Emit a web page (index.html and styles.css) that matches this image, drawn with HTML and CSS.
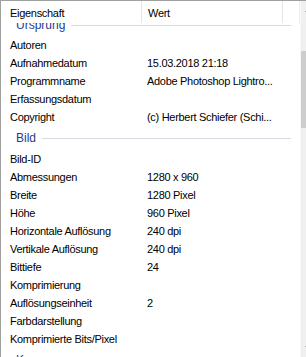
FILE: index.html
```html
<!DOCTYPE html>
<html lang="de">
<head>
    <meta charset="UTF-8">
    <title>Eigenschaften</title>
    <link rel="stylesheet" href="styles.css">
</head>
<body>

    <div class="frame">
        <div class="view">
            <div class="main">
                <div class="head">
                    <div class="hcell c1">Eigenschaft</div>
                    <div class="hcell c2">Wert</div>
                    <div class="hcell c3"></div>
                </div>
                <div class="rows">
                    <div class="group first"><span>Ursprung</span><i></i></div>
                    <div class="row"><span class="k">Autoren</span><span class="v"></span></div>
                    <div class="row"><span class="k">Aufnahmedatum</span><span class="v">15.03.2018 21:18</span></div>
                    <div class="row"><span class="k">Programmname</span><span class="v">Adobe Photoshop Lightro...</span></div>
                    <div class="row"><span class="k">Erfassungsdatum</span><span class="v"></span></div>
                    <div class="row"><span class="k">Copyright</span><span class="v">(c) Herbert Schiefer (Schi...</span></div>
                    <div class="group"><span>Bild</span><i></i></div>
                    <div class="row"><span class="k">Bild-ID</span><span class="v"></span></div>
                    <div class="row"><span class="k">Abmessungen</span><span class="v">1280 x 960</span></div>
                    <div class="row"><span class="k">Breite</span><span class="v">1280 Pixel</span></div>
                    <div class="row"><span class="k">Höhe</span><span class="v">960 Pixel</span></div>
                    <div class="row"><span class="k">Horizontale Auflösung</span><span class="v">240 dpi</span></div>
                    <div class="row"><span class="k">Vertikale Auflösung</span><span class="v">240 dpi</span></div>
                    <div class="row"><span class="k">Bittiefe</span><span class="v">24</span></div>
                    <div class="row"><span class="k">Komprimierung</span><span class="v"></span></div>
                    <div class="row"><span class="k">Auflösungseinheit</span><span class="v">2</span></div>
                    <div class="row"><span class="k">Farbdarstellung</span><span class="v"></span></div>
                    <div class="row"><span class="k">Komprimierte Bits/Pixel</span><span class="v"></span></div>
                    <div class="group"><span>Kamera</span><i></i></div>
                </div>
            </div>
            <div class="scroll">
                <div class="arrow"><svg width="9" height="5" viewBox="0 0 9 5"><path d="M0 5 L4.5 0 L9 5 Z" fill="#606060"/></svg></div>
                <div class="track">
                    <div class="thumb"></div>
                </div>
                <div class="arrow"><svg width="9" height="5" viewBox="0 0 9 5"><path d="M0 0 L4.5 5 L9 0 Z" fill="#606060"/></svg></div>
            </div>
        </div>
    </div>

</body>
</html>
```

FILE: styles.css
```css
body { margin: 0; background: #fff; font-family: "Liberation Sans", Arial, sans-serif; font-size: 11px; letter-spacing: -0.3px; color: #000; }
.frame { width: 306px; height: 357px; overflow: hidden; }
.view { width: 317px; height: 357px; display: flex; border-top: 1px solid #a0a0a0; border-left: 1px solid #a0a0a0; box-sizing: border-box; }
.main { flex: 1; display: flex; flex-direction: column; overflow: hidden; background: #fff; }
.head { height: 22px; display: flex; flex-shrink: 0; background: #fff; position: relative; z-index: 1; }
.hcell { height: 22px; line-height: 24px; padding-left: 9px; box-sizing: border-box; border-right: 1px solid #e5e5e5; }
.c1 { width: 141px; }
.c2 { width: 141px; padding-left: 6px; }
.c3 { flex: 1; border-right: 1px solid #f0f0f0; }
.rows { flex: 1; overflow: hidden; }
.row { height: 18.1px; display: flex; align-items: center; }
.k { width: 146px; padding-left: 9px; box-sizing: border-box; }
.v { flex: 1; white-space: nowrap; }
.group { height: 23px; display: flex; align-items: center; padding-left: 15px; color: #1e3c91; font-size: 12px; letter-spacing: 0; }
.group.first { margin-top: -10px; }
.group i { flex: 1; height: 1px; background: #d5dae3; margin: 1px 9px 0 6px; }
.scroll { width: 17px; flex-shrink: 0; background: #f0f0f0; border-left: 1px solid #f7f7f7; box-sizing: border-box; display: flex; flex-direction: column; }
.arrow { height: 17px; display: flex; align-items: center; justify-content: center; }
.track { flex: 1; }
.thumb { height: 77px; margin: 33px 1px 0 0; background: #cdcdcd; }
```
